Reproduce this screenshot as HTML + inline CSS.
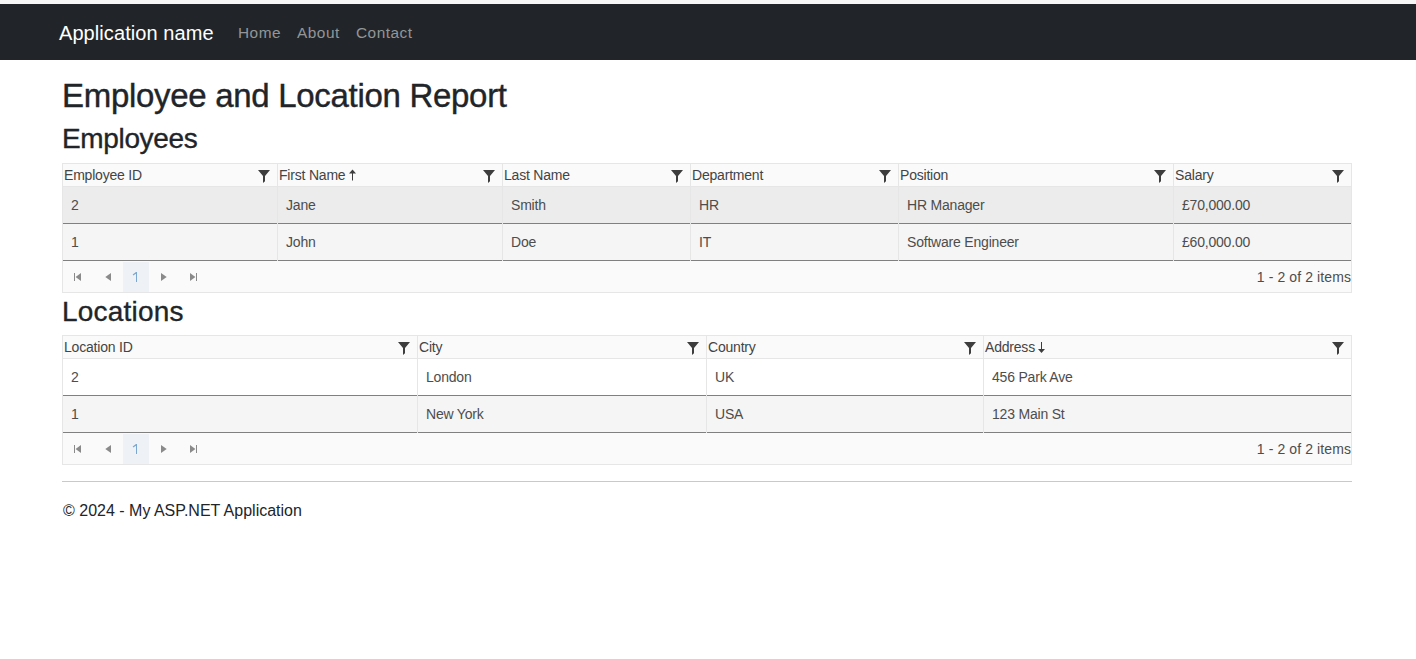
<!DOCTYPE html>
<html>
<head>
<meta charset="utf-8">
<style>
html,body{margin:0;padding:0;background:#fff;}
body{width:1416px;height:659px;position:relative;overflow:hidden;font-family:"Liberation Sans",sans-serif;color:#212529;}
.a{position:absolute;white-space:nowrap;}
.topstrip{position:absolute;left:0;top:0;width:1416px;height:4px;background:#f6f6f6;}
.nav{position:absolute;left:0;top:4px;width:1416px;height:56px;background:#212529;}
.brand{font-size:20px;line-height:20px;color:#fff;letter-spacing:0.08px;}
.nl{font-size:15.4px;line-height:16px;color:#939598;letter-spacing:0.5px;}
.h1{font-size:33px;line-height:33px;color:#212529;letter-spacing:-0.3px;-webkit-text-stroke:0.4px #212529;}
.h3{font-size:28px;line-height:28px;color:#212529;letter-spacing:-0.15px;-webkit-text-stroke:0.35px #212529;}
.grid{position:absolute;left:62px;width:1290px;box-sizing:border-box;border:1px solid #e6e6e6;}
.bg{position:absolute;left:0;width:1288px;}
.vl{position:absolute;width:1px;background:#e6e6e6;}
.t{position:absolute;white-space:nowrap;font-size:14px;line-height:14px;color:#4d4d4d;letter-spacing:-0.2px;}
.th{color:#444444;}
.flt,.ar,.pi{position:absolute;}
.footer{font-size:16px;line-height:16px;color:#212529;}
</style>
</head>
<body>
<div class="topstrip"></div>
<div class="nav"></div>
<div class="a brand" style="left:59px;top:23px;">Application name</div>
<div class="a nl" style="left:238px;top:25px;">Home</div>
<div class="a nl" style="left:297px;top:25px;">About</div>
<div class="a nl" style="left:356px;top:25px;">Contact</div>
<div class="a h1" style="left:62px;top:79px;">Employee and Location Report</div>
<div class="a h3" style="left:62px;top:125px;letter-spacing:-0.35px">Employees</div>
<div class="grid" style="top:163px;height:130px;">
<div class="bg" style="top:0;height:22px;background:#fafafa"></div>
<div class="bg" style="top:22px;height:1px;background:#e6e6e6"></div>
<div class="bg" style="top:23px;height:36px;background:#ececec"></div>
<div class="bg" style="top:59px;height:1px;background:#808080"></div>
<div class="bg" style="top:60px;height:36px;background:#f5f5f5"></div>
<div class="bg" style="top:96px;height:1px;background:#808080"></div>
<div class="bg" style="top:97px;height:31px;background:#fafafa"></div>
<div class="vl" style="left:214px;top:0;height:97px"></div>
<div class="vl" style="left:439px;top:0;height:97px"></div>
<div class="vl" style="left:627px;top:0;height:97px"></div>
<div class="vl" style="left:835px;top:0;height:97px"></div>
<div class="vl" style="left:1110px;top:0;height:97px"></div>
<div class="t th" style="left:1px;top:4px">Employee ID</div>
<svg class="flt" style="left:195px;top:6px" width="12" height="13" viewBox="0 0 12 13"><path d="M0 0H12L7 5.9V11.2L5 13V5.9Z" fill="#3d3d3d"/></svg>
<div class="t th" style="left:216px;top:4px">First Name</div>
<svg class="flt" style="left:420px;top:6px" width="12" height="13" viewBox="0 0 12 13"><path d="M0 0H12L7 5.9V11.2L5 13V5.9Z" fill="#3d3d3d"/></svg>
<div class="t th" style="left:441px;top:4px">Last Name</div>
<svg class="flt" style="left:608px;top:6px" width="12" height="13" viewBox="0 0 12 13"><path d="M0 0H12L7 5.9V11.2L5 13V5.9Z" fill="#3d3d3d"/></svg>
<div class="t th" style="left:629px;top:4px">Department</div>
<svg class="flt" style="left:816px;top:6px" width="12" height="13" viewBox="0 0 12 13"><path d="M0 0H12L7 5.9V11.2L5 13V5.9Z" fill="#3d3d3d"/></svg>
<div class="t th" style="left:837px;top:4px">Position</div>
<svg class="flt" style="left:1091px;top:6px" width="12" height="13" viewBox="0 0 12 13"><path d="M0 0H12L7 5.9V11.2L5 13V5.9Z" fill="#3d3d3d"/></svg>
<div class="t th" style="left:1112px;top:4px">Salary</div>
<svg class="flt" style="left:1269px;top:6px" width="12" height="13" viewBox="0 0 12 13"><path d="M0 0H12L7 5.9V11.2L5 13V5.9Z" fill="#3d3d3d"/></svg>
<svg class="ar" style="left:286px;top:5px" width="7" height="12" viewBox="0 0 7 12"><path d="M0 4.4L3.5 0.5L7 4.4Z" fill="#3d3d3d"/><rect x="3" y="4" width="1" height="7.5" fill="#3d3d3d"/></svg>
<div class="t" style="left:8px;top:34px">2</div>
<div class="t" style="left:223px;top:34px">Jane</div>
<div class="t" style="left:448px;top:34px">Smith</div>
<div class="t" style="left:636px;top:34px">HR</div>
<div class="t" style="left:844px;top:34px">HR Manager</div>
<div class="t" style="left:1119px;top:34px">£70,000.00</div>
<div class="t" style="left:8px;top:71px">1</div>
<div class="t" style="left:223px;top:71px">John</div>
<div class="t" style="left:448px;top:71px">Doe</div>
<div class="t" style="left:636px;top:71px">IT</div>
<div class="t" style="left:844px;top:71px">Software Engineer</div>
<div class="t" style="left:1119px;top:71px">£60,000.00</div>
<svg class="pi" style="left:11px;top:109px" width="7" height="8" viewBox="0 0 7 8"><rect x="0" y="0" width="1" height="8" fill="#8a8a8a"/><path d="M1.6 4L7 0V8Z" fill="#8a8a8a"/></svg>
<svg class="pi" style="left:42px;top:109px" width="6" height="8" viewBox="0 0 6 8"><path d="M0.3 4L6 0V8Z" fill="#8a8a8a"/></svg>
<div class="bg" style="left:60px;width:26px;top:98px;height:30px;background:#eef2f6"></div>
<svg class="pi" style="left:69px;top:108px" width="6" height="11" viewBox="0 0 6 11"><path d="M4 0.1H5V10.1H4V1.7L1.2 3.4L0.7 2.5Z" fill="#7ba6d0"/></svg>
<svg class="pi" style="left:98px;top:109px" width="6" height="8" viewBox="0 0 6 8"><path d="M5.7 4L0 0V8Z" fill="#8a8a8a"/></svg>
<svg class="pi" style="left:127px;top:109px" width="7" height="8" viewBox="0 0 7 8"><path d="M5.4 4L0 0V8Z" fill="#8a8a8a"/><rect x="6" y="0" width="1" height="8" fill="#8a8a8a"/></svg>
<div class="t" style="right:0px;top:106px;letter-spacing:0.1px">1 - 2 of 2 items</div>
</div>
<div class="a h3" style="left:62px;top:298px;letter-spacing:0.2px">Locations</div>
<div class="grid" style="top:335px;height:130px;">
<div class="bg" style="top:0;height:22px;background:#fafafa"></div>
<div class="bg" style="top:22px;height:1px;background:#e6e6e6"></div>
<div class="bg" style="top:23px;height:36px;background:#ffffff"></div>
<div class="bg" style="top:59px;height:1px;background:#808080"></div>
<div class="bg" style="top:60px;height:36px;background:#f5f5f5"></div>
<div class="bg" style="top:96px;height:1px;background:#808080"></div>
<div class="bg" style="top:97px;height:31px;background:#fafafa"></div>
<div class="vl" style="left:354px;top:0;height:97px"></div>
<div class="vl" style="left:643px;top:0;height:97px"></div>
<div class="vl" style="left:920px;top:0;height:97px"></div>
<div class="t th" style="left:1px;top:4px">Location ID</div>
<svg class="flt" style="left:335px;top:6px" width="12" height="13" viewBox="0 0 12 13"><path d="M0 0H12L7 5.9V11.2L5 13V5.9Z" fill="#3d3d3d"/></svg>
<div class="t th" style="left:356px;top:4px">City</div>
<svg class="flt" style="left:624px;top:6px" width="12" height="13" viewBox="0 0 12 13"><path d="M0 0H12L7 5.9V11.2L5 13V5.9Z" fill="#3d3d3d"/></svg>
<div class="t th" style="left:645px;top:4px">Country</div>
<svg class="flt" style="left:901px;top:6px" width="12" height="13" viewBox="0 0 12 13"><path d="M0 0H12L7 5.9V11.2L5 13V5.9Z" fill="#3d3d3d"/></svg>
<div class="t th" style="left:922px;top:4px">Address</div>
<svg class="flt" style="left:1269px;top:6px" width="12" height="13" viewBox="0 0 12 13"><path d="M0 0H12L7 5.9V11.2L5 13V5.9Z" fill="#3d3d3d"/></svg>
<svg class="ar" style="left:975px;top:6px" width="7" height="12" viewBox="0 0 7 12"><path d="M0 7.1L3.5 11L7 7.1Z" fill="#3d3d3d"/><rect x="3" y="0" width="1" height="7.5" fill="#3d3d3d"/></svg>
<div class="t" style="left:8px;top:34px">2</div>
<div class="t" style="left:363px;top:34px">London</div>
<div class="t" style="left:652px;top:34px">UK</div>
<div class="t" style="left:929px;top:34px">456 Park Ave</div>
<div class="t" style="left:8px;top:71px">1</div>
<div class="t" style="left:363px;top:71px">New York</div>
<div class="t" style="left:652px;top:71px">USA</div>
<div class="t" style="left:929px;top:71px">123 Main St</div>
<svg class="pi" style="left:11px;top:109px" width="7" height="8" viewBox="0 0 7 8"><rect x="0" y="0" width="1" height="8" fill="#8a8a8a"/><path d="M1.6 4L7 0V8Z" fill="#8a8a8a"/></svg>
<svg class="pi" style="left:42px;top:109px" width="6" height="8" viewBox="0 0 6 8"><path d="M0.3 4L6 0V8Z" fill="#8a8a8a"/></svg>
<div class="bg" style="left:60px;width:26px;top:98px;height:30px;background:#eef2f6"></div>
<svg class="pi" style="left:69px;top:108px" width="6" height="11" viewBox="0 0 6 11"><path d="M4 0.1H5V10.1H4V1.7L1.2 3.4L0.7 2.5Z" fill="#7ba6d0"/></svg>
<svg class="pi" style="left:98px;top:109px" width="6" height="8" viewBox="0 0 6 8"><path d="M5.7 4L0 0V8Z" fill="#8a8a8a"/></svg>
<svg class="pi" style="left:127px;top:109px" width="7" height="8" viewBox="0 0 7 8"><path d="M5.4 4L0 0V8Z" fill="#8a8a8a"/><rect x="6" y="0" width="1" height="8" fill="#8a8a8a"/></svg>
<div class="t" style="right:0px;top:106px;letter-spacing:0.1px">1 - 2 of 2 items</div>
</div>
<div class="a" style="left:62px;top:481px;width:1290px;height:1px;background:#c8c9cb;"></div>
<div class="a footer" style="left:63px;top:503px;">© 2024 - My ASP.NET Application</div>
</body>
</html>
